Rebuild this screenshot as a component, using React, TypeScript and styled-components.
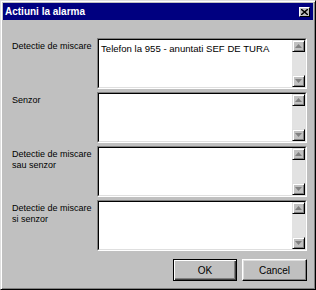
import { Fragment } from "react";
import styled, { createGlobalStyle } from "styled-components";

const Global = createGlobalStyle`
  html, body {
    margin: 0;
    padding: 0;
    background: #c0c0c0;
  }
  body {
    font-family: "Liberation Sans", Arial, sans-serif;
  }
`;

const Win = styled.div`
  width: 316px;
  height: 290px;
  box-sizing: border-box;
  background: #c0c0c0;
  border: 1px solid;
  border-color: #dfdfdf #000 #000 #dfdfdf;
  box-shadow: inset 1px 1px #fff, inset -1px -1px #808080;
  padding: 2px;
  display: flex;
  flex-direction: column;
`;

const TitleBar = styled.div`
  height: 17px;
  background: #000080;
  display: flex;
  align-items: center;
  justify-content: space-between;
  padding: 0 2px 0 2px;
`;

const Title = styled.span`
  color: #fff;
  font-weight: bold;
  font-size: 10px;
`;

const CloseBtn = styled.div`
  width: 11px;
  height: 10px;
  box-sizing: border-box;
  background: #c0c0c0;
  border: 1px solid;
  border-color: #fff #000 #000 #fff;
  display: flex;
  align-items: center;
  justify-content: center;
  margin-right: 1px;
`;

const Body = styled.div`
  flex: 1;
  display: flex;
  flex-direction: column;
  padding: 18px 6px 0 9px;
`;

const Rows = styled.div`
  display: grid;
  grid-template-columns: 85px 210px;
  row-gap: 3px;
`;

const Label = styled.div`
  font-size: 9px;
  line-height: 11px;
  color: #000;
  padding-top: 3px;
  white-space: nowrap;
`;

const Field = styled.div`
  height: 51px;
  box-sizing: border-box;
  border: 1px solid;
  border-color: #808080 #fff #fff #808080;
  display: flex;
`;

const Inner = styled.div`
  flex: 1;
  display: flex;
  border: 1px solid;
  border-color: #000 #dfdfdf #dfdfdf #000;
  background: #fff;
`;

const Text = styled.div`
  flex: 1;
  font-size: 9.6px;
  line-height: 11px;
  padding: 3px 2px;
  color: #000;
  white-space: nowrap;
`;

const Scroll = styled.div`
  width: 13px;
  display: flex;
  flex-direction: column;
  justify-content: space-between;
  background: #e2e2e2;
`;

const Arrow = styled.div`
  height: 12px;
  box-sizing: border-box;
  background: #c0c0c0;
  border: 1px solid;
  border-color: #dfdfdf #000 #000 #dfdfdf;
  box-shadow: inset 1px 1px #fff, inset -1px -1px #808080;
  display: flex;
  align-items: center;
  justify-content: center;
`;

const Footer = styled.div`
  display: flex;
  justify-content: flex-end;
  gap: 5px;
  margin-top: 8px;
`;

const Button = styled.div<{ $default?: boolean }>`
  width: ${(p) => (p.$default ? "64px" : "65px")};
  height: 22px;
  box-sizing: border-box;
  background: #c0c0c0;
  border: 1px solid;
  border-color: ${(p) => (p.$default ? "#000" : "#fff #000 #000 #fff")};
  box-shadow: ${(p) =>
    p.$default
      ? "inset 1px 1px #fff, inset -1px -1px #404040, inset -2px -2px #808080"
      : "inset -1px -1px #808080, inset 1px 1px #dfdfdf"};
  display: flex;
  align-items: center;
  justify-content: center;
  font-size: 10px;
  color: #000;
`;

function ArrowIcon({ up }: { up?: boolean }) {
  return (
    <svg width="7" height="4" viewBox="0 0 7 4">
      <path
        d={up ? "M3.5 0 L7 4 L0 4 Z" : "M0 0 L7 0 L3.5 4 Z"}
        fill="#808080"
      />
    </svg>
  );
}

const fields = [
  { label: ["Detectie de miscare"], text: "Telefon la 955 - anuntati SEF DE TURA" },
  { label: ["Senzor"], text: "" },
  { label: ["Detectie de miscare", "sau senzor"], text: "" },
  { label: ["Detectie de miscare", "si senzor"], text: "" },
];

export default function App() {
  return (
    <>
      <Global />
      <Win>
        <TitleBar>
          <Title>Actiuni la alarma</Title>
          <CloseBtn>
            <svg width="7" height="6" viewBox="0 0 7 6">
              <path d="M0 0 L7 6 M7 0 L0 6" stroke="#000" strokeWidth="1.4" />
            </svg>
          </CloseBtn>
        </TitleBar>
        <Body>
          <Rows>
            {fields.map((f, i) => (
              <Fragment key={i}>
                <Label>
                  {f.label.map((l) => (
                    <div key={l}>{l}</div>
                  ))}
                </Label>
                <Field>
                  <Inner>
                    <Text>{f.text}</Text>
                    <Scroll>
                      <Arrow>
                        <ArrowIcon up />
                      </Arrow>
                      <Arrow>
                        <ArrowIcon />
                      </Arrow>
                    </Scroll>
                  </Inner>
                </Field>
              </Fragment>
            ))}
          </Rows>
          <Footer>
            <Button $default>OK</Button>
            <Button>Cancel</Button>
          </Footer>
        </Body>
      </Win>
    </>
  );
}
